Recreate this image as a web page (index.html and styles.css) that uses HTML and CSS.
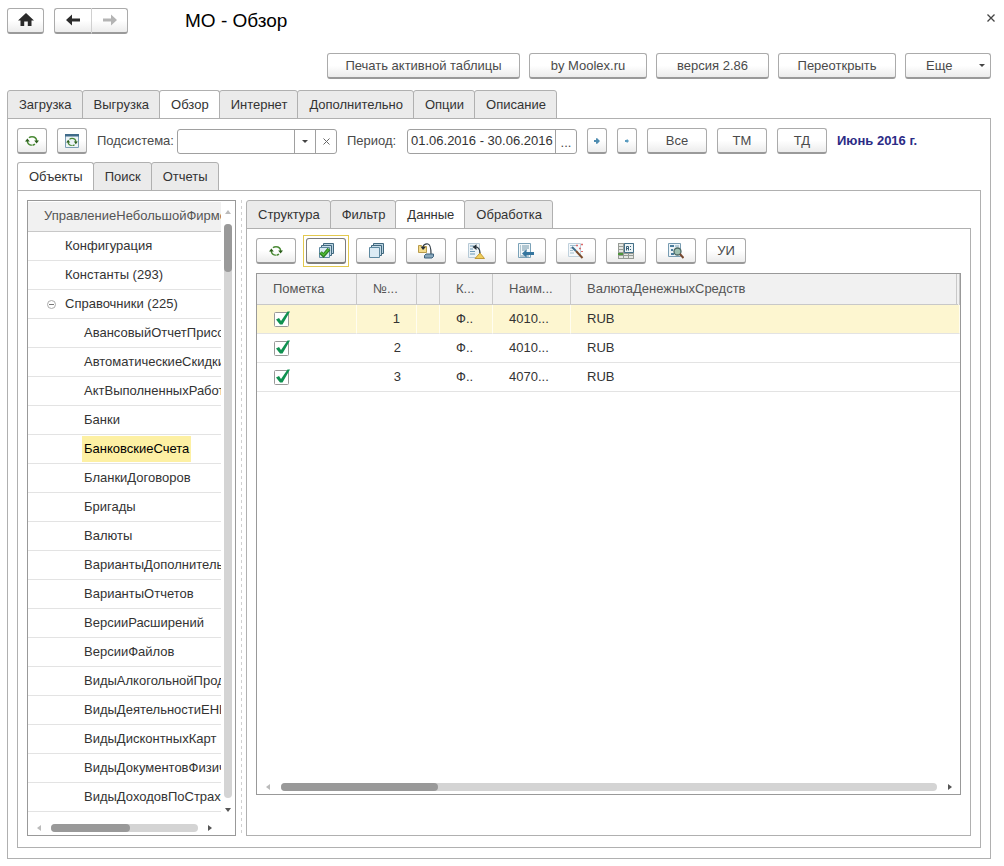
FILE: index.html
```html
<!DOCTYPE html>
<html lang="ru">

<head>
    <meta charset="UTF-8">
    <meta name="viewport" content="width=device-width, initial-scale=1.0">
    <title>МО - Обзор</title>
    <link rel="stylesheet" href="styles.css">
</head>

<body>
    <!-- общие иконки -->
    <svg class="sprite" aria-hidden="true">
        <symbol id="i-refresh" viewBox="0 0 14 12">
            <path d="M2.300 6C2.500 8.500 4 10 6.800 10.200M4 2.800C4.800 2 5.800 1.700 7 1.700C9.800 1.700 11.500 3.500 11.700 6M7.500 10.200C8.500 10.100 9.300 9.700 10 9.200" fill="none" stroke="#4a8a35" stroke-width="1.500" />
            <path d="M0 6.500L2.400 3.400L4.800 6.500ZM9.200 5.500L11.600 8.600L14 5.500Z" fill="#2c5f1c" />
        </symbol>
        <symbol id="i-stack" viewBox="0 0 18 16">
            <path d="M6.500 .5h10v10h-10z" fill="#b9d2e0" stroke="#41697f" />
            <path d="M4.500 2.500h10v10h-10z" fill="#c6dbe7" stroke="#41697f" />
            <path d="M2.500 4.500h10v10h-10z" fill="#dcebf4" stroke="#5d88a0" />
        </symbol>
    </svg>

    <div class="window">
        <header class="titlebar">
            <button class="btn home" aria-label="Начальная страница">
                <svg width="16" height="14" viewBox="0 0 16 14"><path d="M8 0L16 7.500H13.500V13H9.800V8.500H6.200V13H2.500V7.500H0Z" fill="#2b2b2b" /></svg>
            </button>
            <div class="nav">
                <button class="btn" aria-label="Назад">
                    <svg width="14" height="12" viewBox="0 0 14 12"><path d="M0 6L6 0.500V4.500H14V7.500H6V11.500Z" fill="#2b2b2b" /></svg>
                </button>
                <button class="btn" aria-label="Вперед">
                    <svg width="14" height="12" viewBox="0 0 14 12"><path d="M14 6L8 0.500V4.500H0V7.500H8V11.500Z" fill="#b4b4b4" /></svg>
                </button>
            </div>
            <h1>МО - Обзор</h1>
            <button class="close" aria-label="Закрыть">
                <svg width="8" height="8" viewBox="0 0 8 8"><path d="M.5 .5L7.500 7.500M7.500 .5L.5 7.500" stroke="#444" stroke-width="1.300" /></svg>
            </button>
        </header>

        <div class="commands">
            <button class="btn cmd-print">Печать активной таблицы</button>
            <button class="btn cmd">by Moolex.ru</button>
            <button class="btn cmd-version">версия 2.86</button>
            <button class="btn cmd">Переоткрыть</button>
            <button class="btn cmd-more">Еще <span class="caret"></span></button>
        </div>

        <nav class="tabs">
            <button class="tab">Загрузка</button>
            <button class="tab">Выгрузка</button>
            <button class="tab active">Обзор</button>
            <button class="tab">Интернет</button>
            <button class="tab">Дополнительно</button>
            <button class="tab">Опции</button>
            <button class="tab">Описание</button>
        </nav>

        <main class="panel">
            <div class="filters">
                <button class="btn small" aria-label="Обновить"><svg width="14" height="12"><use href="#i-refresh" /></svg></button>
                <button class="btn small" aria-label="Обновить окно">
                    <svg width="14" height="14" viewBox="0 0 14 14">
                        <path d="M.5 .5h13v13h-13z" fill="#edf4f8" stroke="#7c9fb5" />
                        <path d="M0 0h14v2.500H0z" fill="#3f6b8a" />
                        <svg x="1" y="3" width="12" height="10"><use href="#i-refresh" /></svg>
                    </svg>
                </button>
                <label for="subsystem" class="label-sub">Подсистема:</label>
                <div class="field field-sub">
                    <input type="text" id="subsystem">
                    <button aria-label="Выбрать"><span class="caret"></span></button>
                    <button aria-label="Очистить"><svg width="7" height="7" viewBox="0 0 7 7"><path d="M.5 .5L6.500 6.500M6.500 .5L.5 6.500" stroke="#666" /></svg></button>
                </div>
                <label for="period" class="label-period">Период:</label>
                <div class="field field-period">
                    <input type="text" id="period" value="01.06.2016 - 30.06.2016">
                    <button aria-label="Выбрать период">...</button>
                </div>
                <button class="btn tiny" aria-label="Предыдущий период"><svg width="6" height="6" viewBox="0 0 6 6"><path d="M0 2h2V0.500L3 0L6 3L3 6L2 5.500V4H0Z" fill="#4f8cb0" /></svg></button>
                <button class="btn tiny" aria-label="Следующий период"><svg width="6" height="6" viewBox="0 0 6 6"><path d="M1 2h1.500L3 1L5 3L3 5L2.500 4H1Z" fill="#5b9cc0" /></svg></button>
                <button class="btn wide">Все</button>
                <button class="btn mid">ТМ</button>
                <button class="btn mid">ТД</button>
                <strong class="month">Июнь 2016 г.</strong>
            </div>

            <nav class="tabs">
                <button class="tab active">Объекты</button>
                <button class="tab">Поиск</button>
                <button class="tab">Отчеты</button>
            </nav>

            <section class="panel objects">
                <!-- дерево метаданных -->
                <div class="tree">
                    <div class="tree-body">
                        <div class="tree-head">УправлениеНебольшойФирмой</div>
                        <ul>
                            <li>Конфигурация</li>
                            <li>Константы (293)</li>
                            <li class="group"><button class="toggle" aria-label="Свернуть"></button>Справочники (225)</li>
                            <li class="leaf">АвансовыйОтчетПрисоединенныеФайлы</li>
                            <li class="leaf">АвтоматическиеСкидки</li>
                            <li class="leaf">АктВыполненныхРаботПрисоединенныеФайлы</li>
                            <li class="leaf">Банки</li>
                            <li class="leaf"><span class="selected">БанковскиеСчета</span></li>
                            <li class="leaf">БланкиДоговоров</li>
                            <li class="leaf">Бригады</li>
                            <li class="leaf">Валюты</li>
                            <li class="leaf">ВариантыДополнительныхОтчетов</li>
                            <li class="leaf">ВариантыОтчетов</li>
                            <li class="leaf">ВерсииРасширений</li>
                            <li class="leaf">ВерсииФайлов</li>
                            <li class="leaf">ВидыАлкогольнойПродукции</li>
                            <li class="leaf">ВидыДеятельностиЕНВД</li>
                            <li class="leaf">ВидыДисконтныхКарт</li>
                            <li class="leaf">ВидыДокументовФизическихЛиц</li>
                            <li class="leaf">ВидыДоходовПоСтраховымВзносам</li>
                        </ul>
                    </div>
                    <div class="vscroll">
                        <span class="arrow up"></span>
                        <div class="track"><div class="thumb"></div></div>
                        <span class="arrow down"></span>
                    </div>
                    <div class="hscroll">
                        <span class="arrow left"></span>
                        <div class="track"><div class="thumb"></div></div>
                        <span class="arrow right"></span>
                    </div>
                </div>

                <div class="splitter"></div>

                <div class="details">
                    <nav class="tabs">
                        <button class="tab">Структура</button>
                        <button class="tab">Фильтр</button>
                        <button class="tab active">Данные</button>
                        <button class="tab">Обработка</button>
                    </nav>
                    <section class="panel data">
                        <div class="toolbar">
                            <button class="btn tool" aria-label="Обновить"><svg width="14" height="12"><use href="#i-refresh" /></svg></button>
                            <button class="btn tool focused" aria-label="Пометить все">
                                <svg width="18" height="16" viewBox="0 0 18 16">
                                    <use href="#i-stack" width="18" height="16" />
                                    <path d="M3.500 9.500L6.500 12.500L12 6" fill="none" stroke="#2c7d20" stroke-width="3.500" />
                                    <path d="M3.800 9.500L6.500 12L11.500 6.500" fill="none" stroke="#4fbb35" stroke-width="1.500" />
                                </svg>
                            </button>
                            <button class="btn tool" aria-label="Снять пометки"><svg width="18" height="16"><use href="#i-stack" /></svg></button>
                            <button class="btn tool" aria-label="Выгрузить">
                                <svg width="16" height="16" viewBox="0 0 16 16">
                                    <path d="M.5 2.500h3l1 1h4v6h-8z" fill="#f4dc8c" stroke="#b99b4b" />
                                    <path d="M5 4C5.500 1.500 8 .8 10 1C12.500 1.500 13 6 13 11" fill="none" stroke="#333f48" stroke-width="1.200" />
                                    <path d="M2.500 3.500L7.800 4L5 7Z" fill="#252f38" />
                                    <path d="M6.500 12.500L8 11h7.500v2.500L14 15H6.500z" fill="#89a8bc" stroke="#3d627e" />
                                </svg>
                            </button>
                            <button class="btn tool" aria-label="Загрузить">
                                <svg width="17" height="16" viewBox="0 0 17 16">
                                    <path d="M.5 .5h11v14H.5z" fill="#edf4f8" stroke="#b6c9d6" />
                                    <path d="M2 3h4M2 6h3M2 8.500h5M2 11h5" stroke="#6d9ab8" />
                                    <path d="M6.500 4C10 3.500 12 6 12 10" fill="none" stroke="#2e3b45" stroke-width="1.300" />
                                    <path d="M4.500 4L8.500 1.200V7Z" fill="#24303a" />
                                    <path d="M12 10L16.500 15.500H7Z" fill="#f1cf5c" stroke="#c19a39" />
                                </svg>
                            </button>
                            <button class="btn tool" aria-label="Заполнить">
                                <svg width="16" height="16" viewBox="0 0 16 16">
                                    <path d="M.5 .5h12v14H.5z" fill="#f3f8fa" stroke="#7ba2b8" />
                                    <path d="M2 3h1M4 3h7M2 5h1M4 5h7M2 7h1M4 7h5M2 9h1M2 11h1M2 13h9" stroke="#7196aa" />
                                    <path d="M4 10.500L8.500 6.500V9H16V12H8.500V14.500Z" fill="#35769f" />
                                </svg>
                            </button>
                            <button class="btn tool" aria-label="Обработать">
                                <svg width="16" height="16" viewBox="0 0 16 16">
                                    <path d="M.5 .5h12v13H.5z" fill="#f4f8fb" stroke="#c0d1dd" />
                                    <path d="M2 2.500h6M2 5h2M2 7.500h3M2 10h4" stroke="#a3c0d1" />
                                    <path d="M4 4L8 8" stroke="#3e6b88" stroke-width="2" />
                                    <path d="M8 8L14.500 15" stroke="#7b4c2c" stroke-width="2" />
                                    <path d="M8 2.500h2M13 1.500h2M11 5.500h2M13 8.500h2M9 1.500v2M14 .5v2M12 4.500v2" stroke="#dc6a6a" />
                                </svg>
                            </button>
                            <button class="btn tool" aria-label="Сравнить">
                                <svg width="16" height="16" viewBox="0 0 16 16">
                                    <path d="M0 0h16v16H0z" fill="#969b95" />
                                    <path d="M1 1h4v2H1zM1 4h4v2H1zM1 7h4v2H1zM1 13h4v2H1zM6 11h4v1H6zM6 13h4v2H6zM11 11h4v1h-4zM11 13h4v2h-4z" fill="#e5e7e3" />
                                    <path d="M0 10h5v2H0z" fill="#4f963c" />
                                    <path d="M6.500 .5h9v9h-9z" fill="#edf4f6" stroke="#447089" />
                                    <path d="M8.500 7.500V3.500h2v4M8.500 5.500h2M12.500 3v1M12.500 6v1" fill="none" stroke="#365e76" />
                                </svg>
                            </button>
                            <button class="btn tool" aria-label="Найти">
                                <svg width="16" height="16" viewBox="0 0 16 16">
                                    <path d="M.5 .5h12v13H.5z" fill="#edf4f8" stroke="#789cb2" />
                                    <path d="M2 2h4v2H2zM3 6h2v2H3zM3 10h3v2H3z" fill="#4c7d9d" />
                                    <path d="M7 3h4" stroke="#7ba2b8" />
                                    <circle cx="9.500" cy="8.500" r="3.500" fill="#9fc1b1" stroke="#4b6763" stroke-width="1.300" />
                                    <path d="M12 11L15.500 15" stroke="#774830" stroke-width="2" />
                                </svg>
                            </button>
                            <button class="btn tool">УИ</button>
                        </div>

                        <div class="grid">
                            <table>
                                <colgroup>
                                    <col class="c-mark">
                                    <col class="c-num">
                                    <col class="c-empty">
                                    <col class="c-code">
                                    <col class="c-name">
                                    <col>
                                </colgroup>
                                <thead>
                                    <tr>
                                        <th>Пометка</th>
                                        <th>№...</th>
                                        <th></th>
                                        <th>К...</th>
                                        <th>Наим...</th>
                                        <th>ВалютаДенежныхСредств</th>
                                    </tr>
                                </thead>
                                <tbody>
                                    <tr class="current">
                                        <td><input type="checkbox" aria-label="Пометка 1" checked></td>
                                        <td class="num">1</td>
                                        <td></td>
                                        <td>Ф..</td>
                                        <td>4010...</td>
                                        <td>RUB</td>
                                    </tr>
                                    <tr>
                                        <td><input type="checkbox" aria-label="Пометка 2" checked></td>
                                        <td class="num">2</td>
                                        <td></td>
                                        <td>Ф..</td>
                                        <td>4010...</td>
                                        <td>RUB</td>
                                    </tr>
                                    <tr>
                                        <td><input type="checkbox" aria-label="Пометка 3" checked></td>
                                        <td class="num">3</td>
                                        <td></td>
                                        <td>Ф..</td>
                                        <td>4070...</td>
                                        <td>RUB</td>
                                    </tr>
                                </tbody>
                            </table>
                            <div class="hscroll">
                                <span class="arrow left"></span>
                                <div class="track"><div class="thumb"></div></div>
                                <span class="arrow right"></span>
                            </div>
                        </div>
                    </section>
                </div>
            </section>
        </main>
    </div>
</body>

</html>
```
FILE: styles.css
```css
/* Общие стили */
* {
    box-sizing: border-box;
}

body {
    margin: 0;
    background: #fff;
    color: #333;
    font-family: "Liberation Sans", Arial, sans-serif;
    font-size: 13px;
    line-height: 16px;
}

button,
input {
    font: inherit;
    color: inherit;
}

.sprite {
    position: absolute;
    width: 0;
    height: 0;
}

.window {
    display: flex;
    flex-direction: column;
    min-height: 100vh;
    padding: 8px 13px 7px 7px;
}

/* Кнопки */
.btn {
    display: flex;
    flex: none;
    align-items: center;
    justify-content: center;
    height: 26px;
    padding: 0;
    border: 1px solid #ababab;
    border-bottom: 2px solid #9a9a9a;
    border-radius: 3px;
    background: linear-gradient(#fff 50%, #ececec);
    color: #4a4a4a;
    cursor: pointer;
}

.caret {
    border: 3px solid transparent;
    border-top-color: #444;
    border-bottom: 0;
}

/* Заголовок */
.titlebar {
    display: flex;
    align-items: center;
    height: 25px;
}

.home {
    width: 37px;
    margin-right: 10px;
}

.nav {
    display: flex;
}

.nav .btn {
    width: 38px;
    border-radius: 3px 0 0 3px;
}

.nav .btn + .btn {
    width: 36px;
    border-left: 0;
    border-radius: 0 3px 3px 0;
}

.nav .btn:first-child {
    border-right-color: #d0d0d0;
}

h1 {
    margin: 0 0 0 57px;
    color: #000;
    font-size: 19px;
    font-weight: normal;
    line-height: 24px;
}

.close {
    display: flex;
    margin: 0 -4px 6px auto;
    padding: 0;
    border: 0;
    background: none;
}

.commands {
    display: flex;
    justify-content: flex-end;
    gap: 9px;
    margin: 20px 0 11px;
}

.cmd-print {
    width: 193px;
}

.cmd {
    width: 118px;
}

.cmd-version {
    width: 113px;
}

.cmd-more {
    width: 86px;
    padding: 0 5px 0 20px;
    justify-content: space-between;
}

/* Закладки */
.tabs {
    display: flex;
    margin-bottom: -1px;
}

.tab {
    height: 29px;
    margin-left: -1px;
    padding: 0 10px 0 11px;
    border: 1px solid #b0b0b0;
    border-radius: 3px 3px 0 0;
    background: #ebebeb;
    white-space: nowrap;
    cursor: pointer;
}

.tab:first-child {
    margin-left: 0;
}

.tab.active {
    border-bottom-color: #fff;
    background: #fff;
}

.panel {
    display: flex;
    flex: 1;
    flex-direction: column;
    min-width: 0;
    padding: 9px;
    border: 1px solid #b0b0b0;
}

main.panel {
    padding-bottom: 10px;
}

/* Строка отбора */
.filters {
    display: flex;
    align-items: center;
    gap: 10px;
    margin-bottom: 8px;
    color: #4a4a4a;
    white-space: nowrap;
}

.small {
    width: 30px;
}

.tiny {
    width: 20px;
}

.mid {
    width: 50px;
}

.wide {
    width: 60px;
}

.label-sub {
    width: 70px;
}

.label-period {
    width: 50px;
}

.field {
    display: flex;
    height: 25px;
    border: 1px solid #a0a0a0;
    border-radius: 3px;
}

.field-sub {
    width: 160px;
}

.field-period {
    width: 170px;
}

.field input {
    flex: 1;
    min-width: 0;
    padding: 0 0 0 3px;
    border: 0;
    background: none;
    color: #333;
}

.field button {
    display: flex;
    align-items: center;
    justify-content: center;
    width: 21px;
    padding: 0;
    border: 0;
    border-left: 1px solid #a0a0a0;
    background: none;
}

.field-period button {
    padding-top: 4px;
}

.month {
    color: #2b2b85;
}

/* Дерево */
.objects {
    flex-direction: row;
    padding-bottom: 11px;
}

.tree {
    display: grid;
    flex: none;
    grid-template-columns: 1fr 14px;
    grid-template-rows: 1fr 23px;
    width: 209px;
    padding-top: 1px;
    border: 1px solid #999;
}

.tree-body {
    min-width: 0;
    overflow: hidden;
    white-space: nowrap;
}

.tree-head {
    height: 30px;
    padding-left: 16px;
    border-bottom: 1px solid #c8c8c8;
    background: #f1f1f1;
    color: #555;
    line-height: 28px;
}

.tree ul {
    margin: 0;
    padding: 0;
    list-style: none;
}

.tree li {
    height: 29px;
    padding-left: 37px;
    border-bottom: 1px solid #e3e3e3;
    line-height: 28px;
}

.tree li.group {
    display: flex;
    align-items: center;
    gap: 9px;
    padding-left: 19px;
}

.tree li.leaf {
    padding-left: 56px;
}

.toggle {
    display: flex;
    align-items: center;
    justify-content: center;
    width: 9px;
    height: 9px;
    padding: 0;
    border: 1px solid #aaa;
    border-radius: 50%;
    background: #fff;
}

.toggle::before {
    content: "";
    width: 5px;
    height: 1px;
    background: #777;
}

.selected {
    display: inline-block;
    height: 26px;
    margin-left: -2px;
    padding: 0 2px;
    background: #fdf0a3;
    color: #000;
    line-height: 26px;
}

/* Полосы прокрутки */
.vscroll {
    display: flex;
    flex-direction: column;
    align-items: center;
    padding: 8px 0 0;
}

.hscroll {
    display: flex;
    align-items: center;
}

.track {
    flex: 1;
    border-radius: 4px;
    background: #d4d4d4;
}

.thumb {
    height: 8px;
    border-radius: 4px;
    background: #999;
}

.vscroll .track {
    width: 8px;
    margin: 10px 0;
}

.vscroll .thumb {
    height: 48px;
}

.tree .hscroll {
    grid-column: 1 / 3;
    gap: 10px;
    padding: 8px 23px 0 9px;
}

.tree .hscroll .thumb {
    width: 54%;
}

.arrow {
    border: 3px solid transparent;
}

.up {
    border-top: 0;
    border-bottom: 4px solid #bbb;
}

.down {
    border-top: 4px solid #555;
    border-bottom: 0;
}

.left {
    border-right: 4px solid #bbb;
    border-left: 0;
}

.right {
    border-right: 0;
    border-left: 4px solid #555;
}

.splitter {
    flex: none;
    width: 1px;
    margin: 0 4px 0 5px;
    background: repeating-linear-gradient(#d0d0d0 0 3px, #fff 3px 6px);
}

/* Правая часть */
.details {
    display: flex;
    flex: 1;
    flex-direction: column;
    min-width: 0;
}

.data {
    padding-bottom: 40px;
}

.toolbar {
    display: flex;
    gap: 10px;
    margin-bottom: 9px;
}

.tool {
    width: 40px;
}

/* рамка фокуса */
.tool.focused {
    position: relative;
    border-color: #7d7d7d;
}

.tool.focused::after {
    content: "";
    position: absolute;
    inset: -4px -4px -5px;
    border: 1px solid #e3c94f;
}

.grid {
    display: flex;
    flex: 1;
    flex-direction: column;
    justify-content: space-between;
    border: 1px solid #999;
}

table {
    width: 100%;
    table-layout: fixed;
    border-collapse: separate;
    border-spacing: 0;
}

.c-mark {
    width: 100px;
}

.c-num {
    width: 60px;
}

.c-empty {
    width: 23px;
}

.c-code {
    width: 53px;
}

.c-name {
    width: 78px;
}

th,
td {
    height: 29px;
    padding: 0 0 0 16px;
    border-bottom: 1px solid #e3e3e3;
    text-align: left;
    white-space: nowrap;
}

th {
    height: 31px;
    border-right: 1px solid #c8c8c8;
    border-bottom-color: #c8c8c8;
    background: #f1f1f1;
    color: #555;
    font-weight: normal;
}

th:last-child {
    border-right: 4px double #c8c8c8;
}

td.num {
    padding: 0 16px 0 0;
    text-align: right;
}

.current td {
    border-right: 1px solid #fffdf0;
    background: #fdf6d0;
}

input[type="checkbox"] {
    display: block;
    width: 18px;
    height: 18px;
    margin: 0;
    appearance: none;
    background: url("data:image/svg+xml,%3Csvg xmlns='http://www.w3.org/2000/svg' viewBox='0 0 18 18'%3E%3Crect x='1.500' y='2.500' width='14' height='14' rx='1' fill='%23fff' stroke='%23999'/%3E%3C/svg%3E");
}

input[type="checkbox"]:checked {
    background: url("data:image/svg+xml,%3Csvg xmlns='http://www.w3.org/2000/svg' viewBox='0 0 18 18'%3E%3Crect x='1.500' y='2.500' width='14' height='14' rx='1' fill='%23fff' stroke='%23999'/%3E%3Cpath d='M3 9.500L6 8L8 11L14.500 1.500H17L9.500 14.500H7Z' fill='%230f9150'/%3E%3C/svg%3E");
}

.grid .hscroll {
    gap: 11px;
    padding: 0 8px 3px 9px;
}

.grid .hscroll .thumb {
    width: 24%;
}
```
